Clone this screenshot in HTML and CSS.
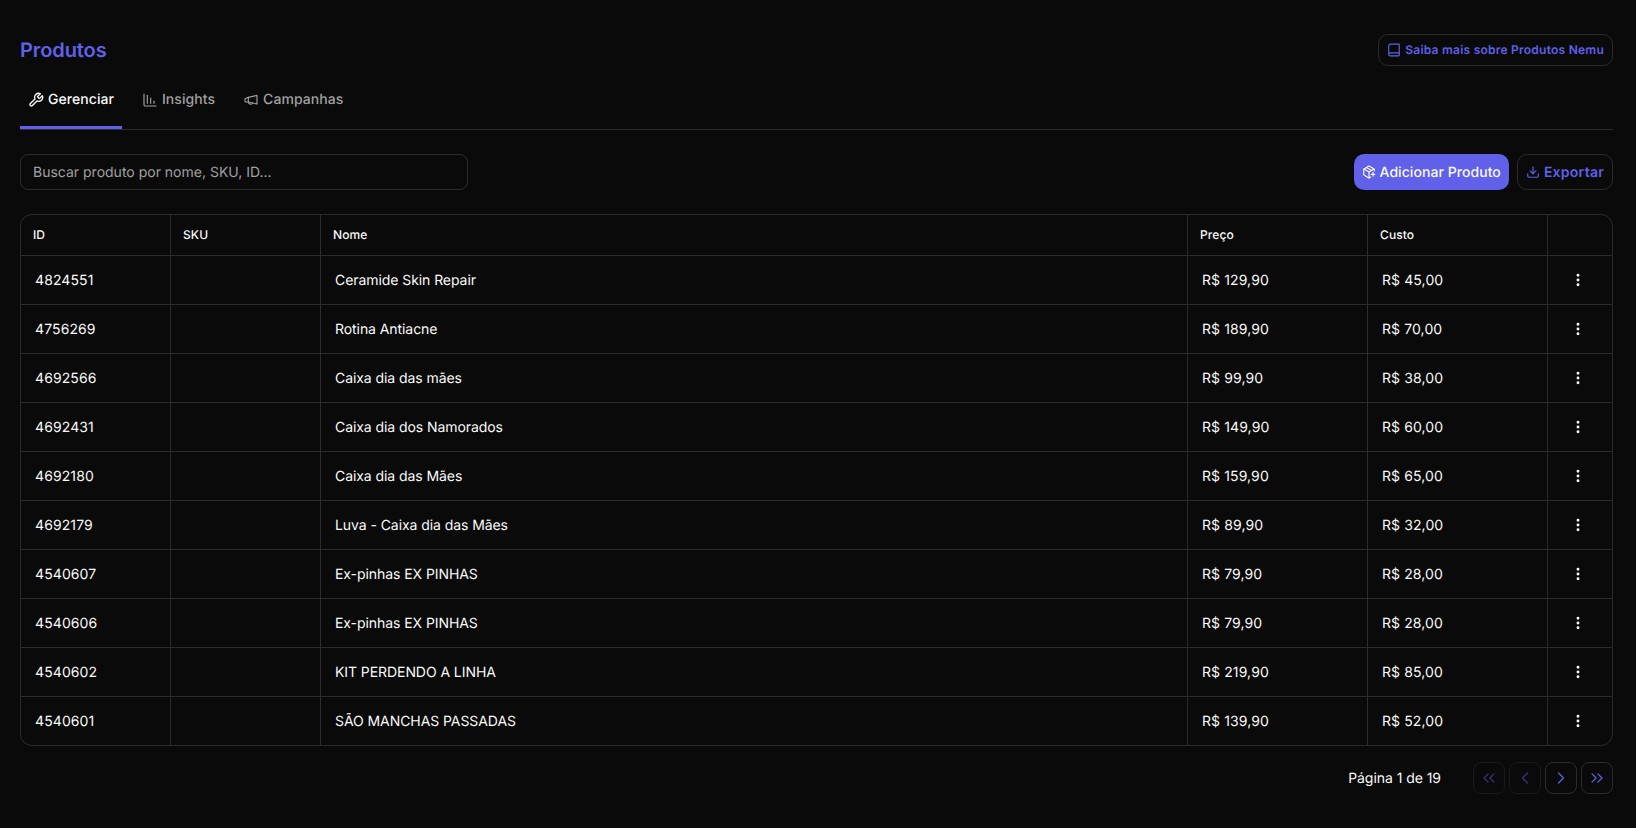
FILE: index.html
```html
<!DOCTYPE html>
<html lang="pt-BR">
<head>
<meta charset="utf-8">
<title>Produtos</title>
<link rel="stylesheet" href="styles.css">
</head>
<body>
<main class="page">
  <header class="head">
    <h1 class="title">Produtos</h1>
    <a class="learn">
      <svg class="ico ico-14" viewBox="0 0 24 24"><path d="M3 19.5v-15A2.5 2.5 0 0 1 5.5 2H20a1 1 0 0 1 1 1v18a1 1 0 0 1-1 1H5.5a2.5 2.5 0 0 1 0-5H21"/></svg>
      Saiba mais sobre Produtos Nemu
    </a>
  </header>
  <nav class="tabs">
    <a class="tab active">
      <svg class="ico" viewBox="0 0 24 24"><path d="M14.7 6.3a1 1 0 0 0 0 1.4l1.6 1.6a1 1 0 0 0 1.4 0l3.77-3.77a6 6 0 0 1-7.94 7.94l-6.91 6.91a2.12 2.12 0 0 1-3-3l6.91-6.91a6 6 0 0 1 7.94-7.94l-3.76 3.76z"/></svg>
      Gerenciar
    </a>
    <a class="tab">
      <svg class="ico" viewBox="0 0 24 24"><path d="M3 3v16a2 2 0 0 0 2 2h16"/><path d="M8 17V5"/><path d="M13 17V9"/><path d="M18 17v-3"/></svg>
      Insights
    </a>
    <a class="tab">
      <svg class="ico" viewBox="0 0 24 24"><path d="M21 5v13L8 15H4a1 1 0 0 1-1-1v-3a1 1 0 0 1 .4-.8L8 8z"/><path d="M8 8v7"/><path d="M8 15a3.5 3.5 0 0 0 6.5 1.6"/></svg>
      Campanhas
    </a>
  </nav>
  <section class="toolbar">
    <input class="search" type="text" placeholder="Buscar produto por nome, SKU, ID...">
    <div class="actions">
      <button class="btn primary">
        <svg class="ico ico-14" viewBox="0 0 24 24"><path d="M16 16h6"/><path d="M19 13v6"/><path d="M21 10V8a2 2 0 0 0-1-1.73l-7-4a2 2 0 0 0-2 0l-7 4A2 2 0 0 0 3 8v8a2 2 0 0 0 1 1.73l7 4a2 2 0 0 0 2 0l2-1.14"/><path d="m7.5 4.27 9 5.15"/><path d="M3.29 7 12 12l8.71-5"/><path d="M12 22V12"/></svg>
        <span class="lbl">Adicionar Produto</span>
      </button>
      <button class="btn outline">
        <svg class="ico ico-14" viewBox="0 0 24 24"><path d="M21 15v4a2 2 0 0 1-2 2H5a2 2 0 0 1-2-2v-4"/><path d="m7 10 5 5 5-5"/><path d="M12 15V3"/></svg>
        <span class="lbl">Exportar</span>
      </button>
    </div>
  </section>
  <div class="table-wrap">
    <table class="grid">
      <colgroup>
        <col class="c-id"><col class="c-sku"><col class="c-name"><col class="c-price"><col class="c-cost"><col class="c-act">
      </colgroup>
      <thead>
        <tr><th>ID</th><th>SKU</th><th>Nome</th><th>Preço</th><th>Custo</th><th></th></tr>
      </thead>
      <tbody>
        <tr><td>4824551</td><td></td><td>Ceramide Skin Repair</td><td>R$ 129,90</td><td>R$ 45,00</td><td class="menu"><svg class="ico dots" viewBox="0 0 24 24"><circle cx="12" cy="5" r="1"/><circle cx="12" cy="12" r="1"/><circle cx="12" cy="19" r="1"/></svg></td></tr>
        <tr><td>4756269</td><td></td><td>Rotina Antiacne</td><td>R$ 189,90</td><td>R$ 70,00</td><td class="menu"><svg class="ico dots" viewBox="0 0 24 24"><circle cx="12" cy="5" r="1"/><circle cx="12" cy="12" r="1"/><circle cx="12" cy="19" r="1"/></svg></td></tr>
        <tr><td>4692566</td><td></td><td>Caixa dia das mães</td><td>R$ 99,90</td><td>R$ 38,00</td><td class="menu"><svg class="ico dots" viewBox="0 0 24 24"><circle cx="12" cy="5" r="1"/><circle cx="12" cy="12" r="1"/><circle cx="12" cy="19" r="1"/></svg></td></tr>
        <tr><td>4692431</td><td></td><td>Caixa dia dos Namorados</td><td>R$ 149,90</td><td>R$ 60,00</td><td class="menu"><svg class="ico dots" viewBox="0 0 24 24"><circle cx="12" cy="5" r="1"/><circle cx="12" cy="12" r="1"/><circle cx="12" cy="19" r="1"/></svg></td></tr>
        <tr><td>4692180</td><td></td><td>Caixa dia das Mães</td><td>R$ 159,90</td><td>R$ 65,00</td><td class="menu"><svg class="ico dots" viewBox="0 0 24 24"><circle cx="12" cy="5" r="1"/><circle cx="12" cy="12" r="1"/><circle cx="12" cy="19" r="1"/></svg></td></tr>
        <tr><td>4692179</td><td></td><td>Luva - Caixa dia das Mães</td><td>R$ 89,90</td><td>R$ 32,00</td><td class="menu"><svg class="ico dots" viewBox="0 0 24 24"><circle cx="12" cy="5" r="1"/><circle cx="12" cy="12" r="1"/><circle cx="12" cy="19" r="1"/></svg></td></tr>
        <tr><td>4540607</td><td></td><td>Ex-pinhas EX PINHAS</td><td>R$ 79,90</td><td>R$ 28,00</td><td class="menu"><svg class="ico dots" viewBox="0 0 24 24"><circle cx="12" cy="5" r="1"/><circle cx="12" cy="12" r="1"/><circle cx="12" cy="19" r="1"/></svg></td></tr>
        <tr><td>4540606</td><td></td><td>Ex-pinhas EX PINHAS</td><td>R$ 79,90</td><td>R$ 28,00</td><td class="menu"><svg class="ico dots" viewBox="0 0 24 24"><circle cx="12" cy="5" r="1"/><circle cx="12" cy="12" r="1"/><circle cx="12" cy="19" r="1"/></svg></td></tr>
        <tr><td>4540602</td><td></td><td>KIT PERDENDO A LINHA</td><td>R$ 219,90</td><td>R$ 85,00</td><td class="menu"><svg class="ico dots" viewBox="0 0 24 24"><circle cx="12" cy="5" r="1"/><circle cx="12" cy="12" r="1"/><circle cx="12" cy="19" r="1"/></svg></td></tr>
        <tr><td>4540601</td><td></td><td>SÃO MANCHAS PASSADAS</td><td>R$ 139,90</td><td>R$ 52,00</td><td class="menu"><svg class="ico dots" viewBox="0 0 24 24"><circle cx="12" cy="5" r="1"/><circle cx="12" cy="12" r="1"/><circle cx="12" cy="19" r="1"/></svg></td></tr>
      </tbody>
    </table>
  </div>
  <footer class="pager">
    <span class="page-label">Página 1 de 19</span>
    <div class="page-btns">
      <button class="pg off"><svg class="ico pg-ico" viewBox="0 0 24 24"><path d="m11 17-5-5 5-5"/><path d="m18 17-5-5 5-5"/></svg></button>
      <button class="pg off"><svg class="ico pg-ico" viewBox="0 0 24 24"><path d="m15 18-6-6 6-6"/></svg></button>
      <button class="pg"><svg class="ico pg-ico" viewBox="0 0 24 24"><path d="m9 18 6-6-6-6"/></svg></button>
      <button class="pg"><svg class="ico pg-ico" viewBox="0 0 24 24"><path d="m6 17 5-5-5-5"/><path d="m13 17 5-5-5-5"/></svg></button>
    </div>
  </footer>
</main>
</body>
</html>
```
FILE: styles.css
```css
* { box-sizing: border-box; }
html, body { margin: 0; height: 100%; }
body {
  background: #0a0a0a;
  color: #fafafa;
  font-family: Inter, "Liberation Sans", sans-serif;
  font-size: 14px;
  line-height: 20px;
  text-rendering: geometricPrecision;
  overflow: hidden;
}
.page { padding: 34px 23px 0 20px; }
.ico {
  width: 16px;
  height: 16px;
  fill: none;
  stroke: currentColor;
  stroke-width: 2;
  stroke-linecap: round;
  stroke-linejoin: round;
  flex: none;
}
.ico-14 { width: 14px; height: 14px; }
.head { display: flex; justify-content: space-between; align-items: center; height: 32px; }
.title { margin: 0; font-size: 20px; line-height: 28px; font-weight: 600; letter-spacing: -0.1px; color: #6060e8; }
.learn {
  display: flex;
  align-items: center;
  gap: 4px;
  height: 32px;
  padding: 0 8px;
  border: 1px solid #2c2c2e;
  border-radius: 10px;
  font-size: 12px;
  font-weight: 600;
  letter-spacing: 0.24px;
  color: #6060e8;
}
.tabs { display: flex; margin-top: 16px; height: 48px; border-bottom: 1px solid #2c2c2e; }
.tab {
  display: flex;
  align-items: center;
  gap: 4px;
  height: 47px;
  padding: 0 8px 8px 8px;
  margin-right: 12px;
  color: #a1a1a1;
  font-weight: 500;
  letter-spacing: 0.06px;
  border-bottom: 3px solid transparent;
}
.tab .ico { stroke-width: 1.7; }
.tab.active { color: #fafafa; border-bottom-color: #6060e8; }
.tab.active .ico { stroke-width: 2; }
.toolbar { display: flex; justify-content: space-between; margin-top: 24px; }
.search {
  width: 448px;
  height: 36px;
  padding: 0 12px;
  background: transparent;
  border: 1px solid #2c2c2e;
  border-radius: 8px;
  color: #fafafa;
  font: 14px/20px Inter, "Liberation Sans", sans-serif;
  text-rendering: geometricPrecision;
  outline: none;
}
.search::placeholder { color: #a1a1a1; opacity: 1; }
.actions { display: flex; gap: 8px; }
.btn {
  display: flex;
  align-items: center;
  gap: 4px;
  height: 36px;
  padding: 0 8px;
  border-radius: 10px;
  font: 500 14px/20px Inter, "Liberation Sans", sans-serif;
  text-rendering: geometricPrecision;
}
.lbl { padding-top: 2px; }
.primary { background: #6060e8; border: 0; color: #fafafa; letter-spacing: 0.06px; }
.outline { background: transparent; border: 1px solid #2c2c2e; color: #6060e8; font-weight: 600; letter-spacing: 0.25px; }
.table-wrap {
  margin-top: 24px;
  border: 1px solid #2c2c2e;
  border-radius: 12px;
  overflow: hidden;
}
.grid { width: 100%; table-layout: fixed; border-collapse: separate; border-spacing: 0; }
.c-id, .c-sku { width: 150px; }
.c-price, .c-cost { width: 180px; }
.c-act { width: 64px; }
.grid th {
  height: 41px;
  padding: 0 12px;
  text-align: left;
  font-size: 12px;
  line-height: 16px;
  font-weight: 500;
  letter-spacing: 0.1px;
  border-bottom: 1px solid #2c2c2e;
  border-right: 1px solid #2c2c2e;
}
.grid td {
  height: 49px;
  padding: 2px 14px 0;
  letter-spacing: 0.1px;
  border-bottom: 1px solid #2c2c2e;
  border-right: 1px solid #2c2c2e;
}
.grid td:nth-child(3) { letter-spacing: -0.07px; }
.grid th:last-child, .grid td:last-child { border-right: 0; }
.grid tr:last-child td { border-bottom: 0; height: 48px; }
.grid td.menu { padding: 0 4px 0 0; }
.dots { display: block; margin: 0 auto; fill: currentColor; stroke-width: 2.4; }
.pager { display: flex; justify-content: flex-end; align-items: center; gap: 32px; margin-top: 16px; }
.page-label { padding-top: 2px; letter-spacing: -0.05px; }
.page-btns { display: flex; gap: 4px; }
.pg {
  display: flex;
  align-items: center;
  justify-content: center;
  width: 32px;
  height: 32px;
  padding: 0;
  background: transparent;
  border: 1px solid #2c2c2e;
  border-radius: 8px;
  color: #6060e8;
}
.pg-ico { width: 20px; height: 20px; stroke-width: 1.5; }
.pg.off { opacity: 0.5; }
```
